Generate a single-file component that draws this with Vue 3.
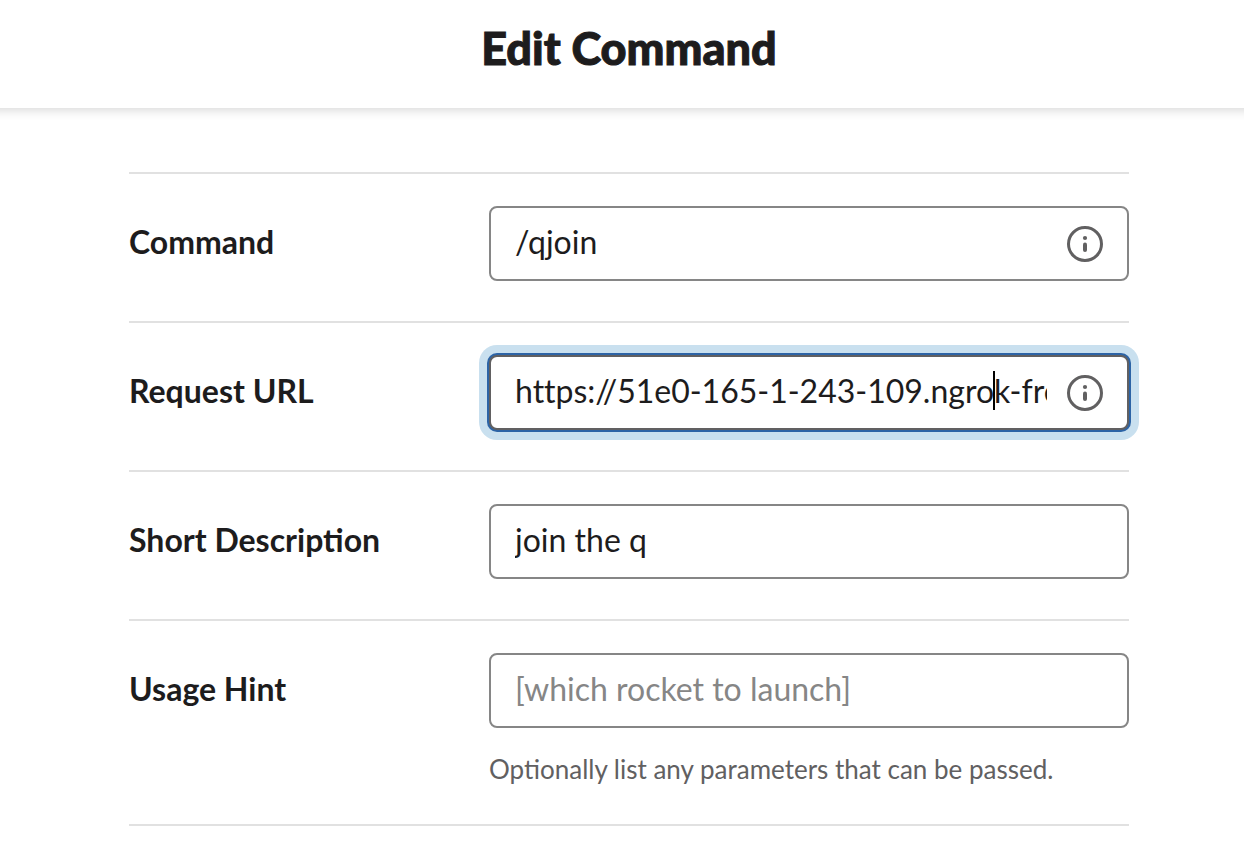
<script setup>
const fields = [
  { id: 'command', label: 'Command', value: '/qjoin', info: true },
  { id: 'url', label: 'Request URL', value: 'https://51e0-165-1-243-109.ngrok-free.app/join', info: true, focused: true },
  { id: 'description', label: 'Short Description', value: 'join the q' },
  { id: 'hint', label: 'Usage Hint', value: '', placeholder: '[which rocket to launch]', help: 'Optionally list any parameters that can be passed.' },
]
</script>

<template>
  <div class="page">
    <header class="header">
      <h1>Edit Command</h1>
    </header>
    <form class="form" @submit.prevent>
      <div v-for="f in fields" :key="f.id" class="row">
        <label :for="f.id">{{ f.label }}</label>
        <div class="control">
          <div class="box" :class="{ focused: f.focused }">
            <input :id="f.id" type="text" :value="f.value" :placeholder="f.placeholder" autocomplete="off" spellcheck="false" />
            <span v-if="f.focused" class="caret"></span>
            <button v-if="f.info" type="button" class="info" :aria-label="'About ' + f.label">
              <svg viewBox="0 0 38 38" width="38" height="38" fill="none">
                <circle cx="19" cy="19" r="16.5" stroke="#616061" stroke-width="3" />
                <circle cx="19" cy="13" r="2.1" fill="#616061" />
                <path d="M19 19.4v5.6" stroke="#616061" stroke-width="4" stroke-linecap="round" />
              </svg>
            </button>
          </div>
          <p v-if="f.help" class="help">{{ f.help }}</p>
        </div>
      </div>
    </form>
  </div>
</template>

<style>
body {
  margin: 0;
  background: #fff;
}
</style>

<style scoped>
.page {
  min-height: 100vh;
  overflow-x: clip;
  font-family: Lato, sans-serif;
  color: #1d1c1d;
}
.header {
  box-sizing: border-box;
  height: 108px;
  padding: 19px 0 0 14px;
  text-align: center;
  box-shadow: 0 -10px 10px 12px rgba(0, 0, 0, 0.16);
}
h1 {
  margin: 0;
  font-family: "Lato Black", Lato, sans-serif;
  font-size: 45px;
  line-height: 58px;
  font-weight: 900;
  -webkit-text-stroke: 1px #1d1c1d;
}
.form {
  margin: 64px 115px 0 129px;
  border-bottom: 2px solid #e1e1e1;
}
.row {
  display: grid;
  grid-template-columns: 360px 1fr;
  align-items: start;
  padding: 32px 0 40px;
  border-top: 2px solid #e1e1e1;
}
label {
  font-size: 32px;
  line-height: 72px;
  font-weight: 700;
}
.box {
  position: relative;
  box-sizing: border-box;
  display: flex;
  align-items: center;
  height: 75px;
  padding: 0 23px 0 24px;
  border: 2px solid #868686;
  border-radius: 8px;
  background: #fff;
}
.focused {
  border-color: #616061;
  box-shadow: 0 0 0 2px #2d64a6, 0 0 0 10px #c9e0ef;
}
input {
  flex: 1;
  min-width: 0;
  padding: 0 0 4px;
  border: 0;
  outline: 0;
  background: none;
  color: inherit;
  font: 32px/44px Lato, sans-serif;
  font-variant-ligatures: none;
}
input::placeholder {
  color: #868686;
  opacity: 1;
}
.caret {
  position: absolute;
  left: 502px;
  top: 14px;
  width: 2px;
  height: 39px;
  background: #000;
}
.info {
  display: flex;
  margin-left: 19px;
  padding: 0;
  border: 0;
  background: none;
}
.help {
  margin: 26px 0 0;
  font-size: 26px;
  line-height: 30px;
  color: #616061;
}
</style>
